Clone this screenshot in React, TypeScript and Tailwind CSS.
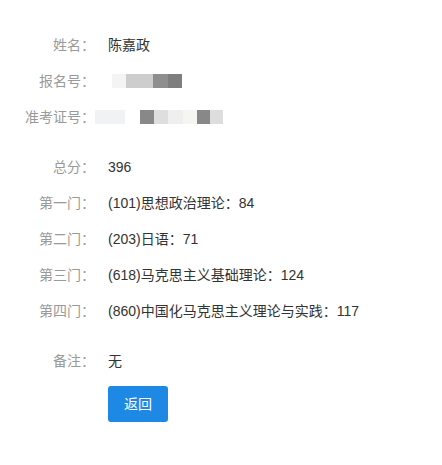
import React from "react";

const font = { fontFamily: '"Liberation Sans", "Noto Sans CJK SC", sans-serif' };

function Row({ label, children }: { label: string; children?: React.ReactNode }) {
  return (
    <div className="flex h-[36px] items-center">
      <div className="w-[95px] shrink-0 text-right text-[14px] text-[#9a9a9a]">{label}：</div>
      <div className="ml-[13px] flex items-center text-[14px] text-[#333]">{children}</div>
    </div>
  );
}

export default function App() {
  return (
    <div className="min-h-[465px] w-[442px] bg-white pt-[27px]" style={font}>
      <Row label="姓名">陈嘉政</Row>
      <Row label="报名号">
        <div className="flex h-[14px] pl-[4px]">
          <div className="w-[14px] bg-[#f4f4f4]" />
          <div className="w-[27px] bg-[#cdcdcd]" />
          <div className="w-[15px] bg-[#8e8e8e]" />
          <div className="w-[14px] bg-[#7e7e7e]" />
        </div>
      </Row>
      <Row label="准考证号">
        <div className="-ml-[13px] flex h-[14px]">
          <div className="w-[30px] bg-[#f1f2f4]" />
          <div className="w-[15px] bg-white" />
          <div className="w-[14px] bg-[#888888]" />
          <div className="w-[14px] bg-[#dedede]" />
          <div className="w-[15px] bg-[#efefef]" />
          <div className="w-[14px] bg-[#f6f6f0]" />
          <div className="w-[13px] bg-[#888888]" />
          <div className="w-[13px] bg-[#dddddd]" />
        </div>
      </Row>
      <div className="h-[14px]" />
      <Row label="总分">396</Row>
      <Row label="第一门">(101)思想政治理论：84</Row>
      <Row label="第二门">(203)日语：71</Row>
      <Row label="第三门">(618)马克思主义基础理论：124</Row>
      <Row label="第四门">(860)中国化马克思主义理论与实践：117</Row>
      <div className="h-[14px]" />
      <Row label="备注">无</Row>
      <div className="ml-[108px] mt-[7px]">
        <button className="h-[36px] w-[60px] rounded-[3px] bg-[#1e88e5] text-[14px] text-white">
          返回
        </button>
      </div>
    </div>
  );
}
